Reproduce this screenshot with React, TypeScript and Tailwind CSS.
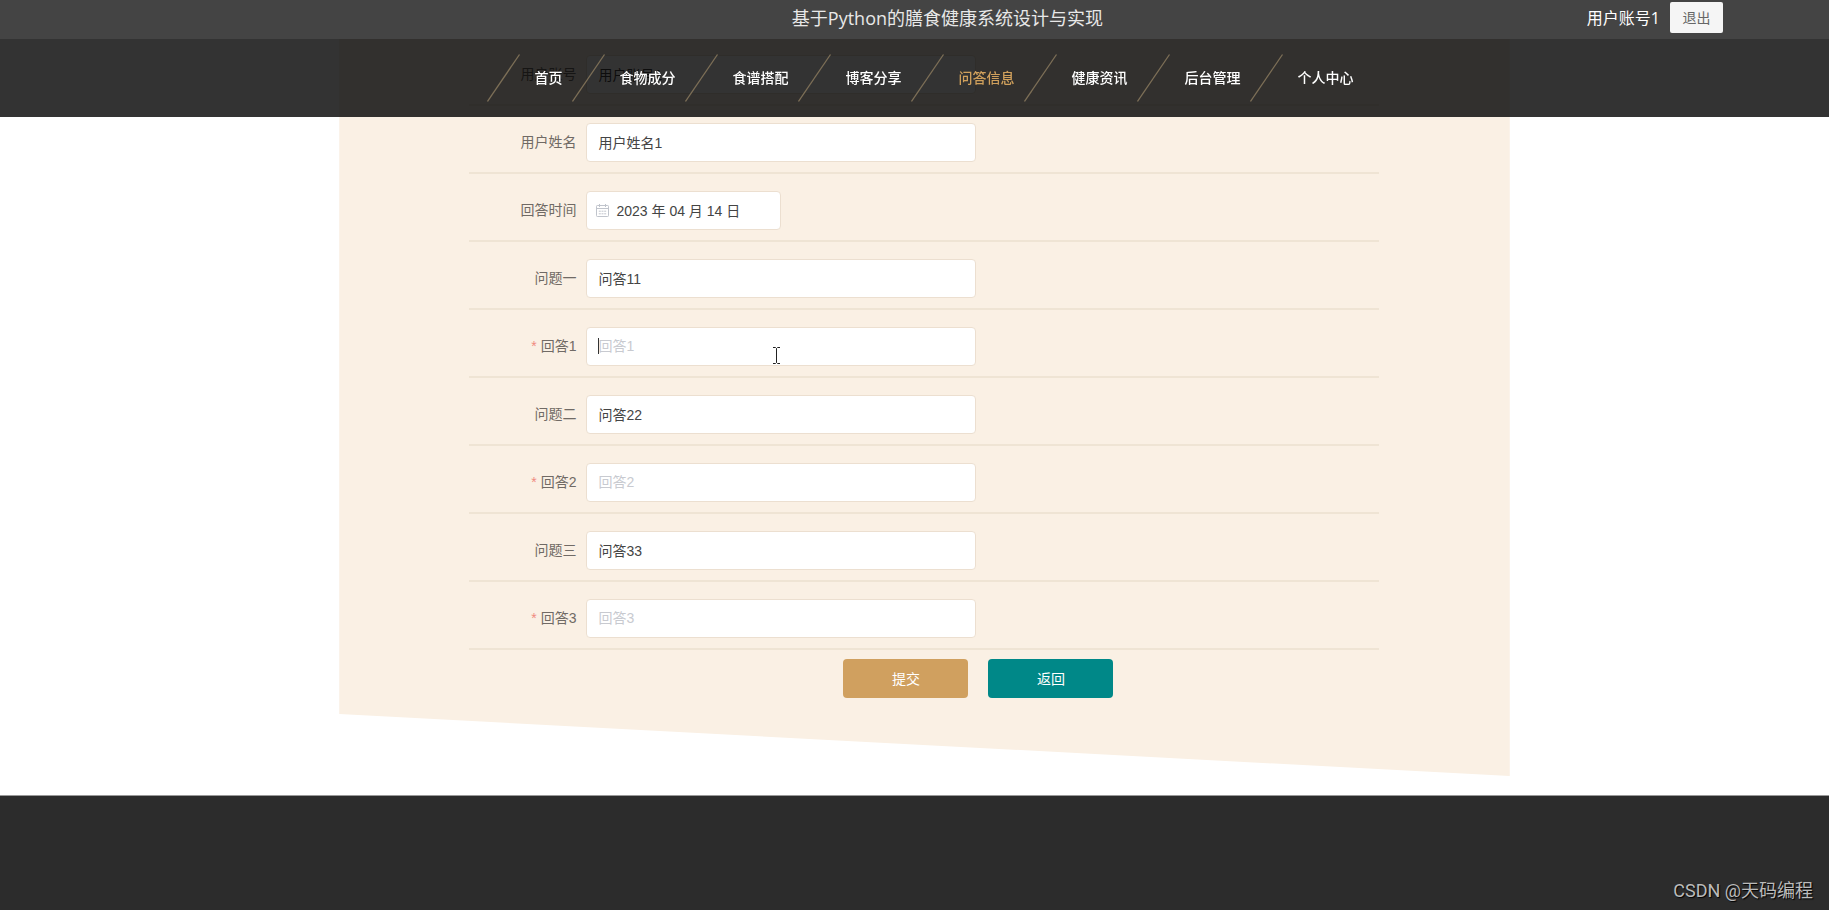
const navItems = ['首页', '食物成分', '食谱搭配', '博客分享', '问答信息', '健康资讯', '后台管理', '个人中心'];

const fields = [
  { id: 'account', label: '用户账号', value: '用户账号1' },
  { id: 'name', label: '用户姓名', value: '用户姓名1' },
  { id: 'time', label: '回答时间', value: '2023 年 04 月 14 日', date: true },
  { id: 'question1', label: '问题一', value: '问答11' },
  { id: 'answer1', label: '回答1', required: true, active: true },
  { id: 'question2', label: '问题二', value: '问答22' },
  { id: 'answer2', label: '回答2', required: true },
  { id: 'question3', label: '问题三', value: '问答33' },
  { id: 'answer3', label: '回答3', required: true }
];

const Slash = () => (
  <svg width="34" height="48" viewBox="0 0 34 48" fill="none" aria-hidden="true">
    <path d="M.5 47.5 32.500 .5" stroke="#7d6f57" strokeWidth="1.3" />
  </svg>
);

const CalendarIcon = () => (
  <svg
    className="absolute top-[13px] left-[10px]"
    width="13"
    height="13"
    viewBox="0 0 13 13"
    fill="none"
    stroke="#c0c4cc"
    aria-hidden="true"
  >
    <rect x=".5" y="1.500" width="12" height="11" rx=".8" />
    <path d="M.5 4.500h12M3.500 0v3M9.500 0v3" />
    <path d="M2.800 7.200h2M5.500 7.200h2M8.200 7.200h2M2.800 9.800h2M5.500 9.800h2M8.200 9.800h2" />
  </svg>
);

const TextCursor = () => (
  <svg
    className="pointer-events-none absolute top-[20px] left-[186px]"
    width="9"
    height="17"
    viewBox="0 0 9 17"
    fill="none"
    stroke="#222"
    aria-hidden="true"
  >
    <path d="M1 .5h2.500l1 1 1-1H8M4.500 1.500v14M1 16.500h2.500l1-1 1 1H8" />
  </svg>
);

const Header = () => (
  <header className="fixed inset-x-0 top-0 z-10">
    <div className="flex h-[39px] items-center bg-[#444] pr-[106px] pb-1 pl-[308px] font-['Open_Sans','Noto_Sans_CJK_SC',sans-serif] text-white">
      <h1 className="flex-1 text-center text-lg text-[#e8e8e8]">基于Python的膳食健康系统设计与实现</h1>
      <div className="flex items-center gap-[10px]">
        <span className="text-base">用户账号1</span>
        <button type="button" className="h-[31px] w-[53px] rounded-xs bg-[#f5f5f5] text-sm text-[#666]">
          退出
        </button>
      </div>
    </div>
    <nav className="flex h-[78px] items-center justify-center bg-black/80 pl-5">
      {navItems.map((item) => (
        <div key={item} className="flex items-center">
          <Slash />
          <a
            href="#"
            className={`pr-[9px] pl-[14px] text-sm font-medium ${item === '问答信息' ? 'text-[#d0a05c]' : 'text-white'}`}
          >
            {item}
          </a>
        </div>
      ))}
    </nav>
  </header>
);

const App = () => {
  return (
    <div className="flex min-h-screen flex-col bg-white font-['Liberation_Sans','Noto_Sans_CJK_SC',sans-serif]">
      <Header />
      <div className="flex justify-center pl-5">
        <main className="w-[64vw] bg-[#faf0e4] pb-[78px] [clip-path:polygon(0_0,100%_0,100%_100%,0_calc(100%-62px))]">
          <form className="mx-auto w-[910px] pt-[38px]">
            {fields.map((field) => (
              <div key={field.id} className="flex items-center border-b-2 border-[#efe4d4] pt-[17px] pb-[10px]">
                <label htmlFor={field.id} className="w-[117px] pr-[10px] pb-[2px] text-right text-sm text-[#706a65]">
                  {field.required && <span className="mr-1 text-[#f08a80]">*</span>}
                  {field.label}
                </label>
                <div className={`relative ${field.date ? 'w-[195px]' : 'w-[390px]'}`}>
                  <input
                    id={field.id}
                    type="text"
                    defaultValue={field.value}
                    placeholder={field.value ? undefined : field.label}
                    className={`block h-[39px] w-full rounded-sm border border-[#ecdfd0] bg-white pr-3 pb-[2px] text-sm text-[#444] outline-none placeholder:text-[#c8cad0] ${field.date ? 'pl-[29px]' : 'pl-[11px]'}`}
                  />
                  {field.date && <CalendarIcon />}
                  {field.active && <span className="absolute top-[11px] left-[12px] h-4 w-px bg-[#333]" />}
                  {field.active && <TextCursor />}
                </div>
              </div>
            ))}
            <div className="flex justify-center gap-5 pt-[9px] pl-[108px]">
              <button type="submit" className="h-[39px] w-[125px] rounded-sm bg-[#d0a05f] text-sm text-white">
                提交
              </button>
              <button type="button" className="h-[39px] w-[125px] rounded-sm bg-[#008888] text-sm text-white">
                返回
              </button>
            </div>
          </form>
        </main>
      </div>
      <footer className="mt-[19px] flex flex-1 items-end justify-end border-t border-[#999] bg-[#2c2c2c] pr-4 pb-[5px]">
        <p className="font-['Roboto','Noto_Sans_CJK_SC',sans-serif] text-lg text-[#bbb] [text-shadow:1px_1px_1px_#000]">
          CSDN @天码编程
        </p>
      </footer>
    </div>
  );
};

export default App;
